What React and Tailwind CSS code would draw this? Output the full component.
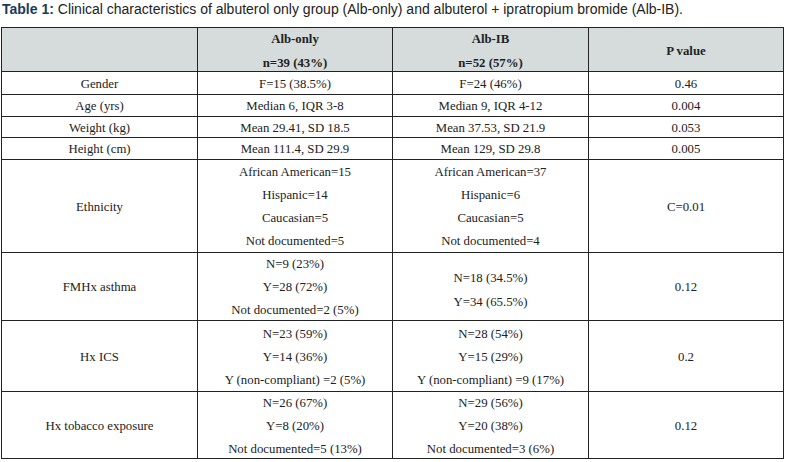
import React from "react";

const rows = [
  { h: "h-[23px]", c: [["Gender"], ["F=15 (38.5%)"], ["F=24 (46%)"], ["0.46"]] },
  { h: "h-[22px]", c: [["Age (yrs)"], ["Median 6, IQR 3-8"], ["Median 9, IQR 4-12"], ["0.004"]] },
  { h: "h-[21px]", c: [["Weight (kg)"], ["Mean 29.41, SD 18.5"], ["Mean 37.53, SD 21.9"], ["0.053"]] },
  { h: "h-[22px]", c: [["Height (cm)"], ["Mean 111.4, SD 29.9"], ["Mean 129, SD 29.8"], ["0.005"]] },
  {
    h: "h-[93px]",
    c: [
      ["Ethnicity"],
      ["African American=15", "Hispanic=14", "Caucasian=5", "Not documented=5"],
      ["African American=37", "Hispanic=6", "Caucasian=5", "Not documented=4"],
      ["C=0.01"],
    ],
  },
  {
    h: "h-[68px]",
    c: [
      ["FMHx asthma"],
      ["N=9 (23%)", "Y=28 (72%)", "Not documented=2 (5%)"],
      ["N=18 (34.5%)", "Y=34 (65.5%)"],
      ["0.12"],
    ],
    wide: 2,
  },
  {
    h: "h-[71px]",
    c: [
      ["Hx ICS"],
      ["N=23 (59%)", "Y=14 (36%)", "Y (non-compliant) =2 (5%)"],
      ["N=28 (54%)", "Y=15 (29%)", "Y (non-compliant) =9 (17%)"],
      ["0.2"],
    ],
  },
  {
    h: "h-[67px]",
    c: [
      ["Hx tobacco exposure"],
      ["N=26 (67%)", "Y=8 (20%)", "Not documented=5 (13%)"],
      ["N=29 (56%)", "Y=20 (38%)", "Not documented=3 (6%)"],
      ["0.12"],
    ],
  },
];

function Cell({ lines, h, bold, bg, wide }) {
  return (
    <div
      className={`${h} ${bg ? "bg-[#d5dcdb]" : "bg-white"} border-r border-b border-[#222222] flex flex-col items-center justify-center ${wide ? "pt-[6px]" : "pt-[2px]"} ${bold ? "font-bold" : ""}`}
    >
      {lines.map((l, i) => (
        <div key={i} className={`${wide || bold ? "leading-[24px]" : "leading-[23px]"} whitespace-nowrap`}>
          {l}
        </div>
      ))}
    </div>
  );
}

export default function App() {
  return (
    <div className="w-[787px] h-[462px] bg-white overflow-hidden">
      <div
        className="pl-[2px] pt-[1px] h-[27px] text-[14px] leading-[16px] text-[#222222] whitespace-nowrap"
        style={{ fontFamily: '"Liberation Sans", Arial, sans-serif' }}
      >
        <span className="font-bold text-[#1a3a5c]">Table 1:</span> Clinical characteristics of albuterol only
        group (Alb-only) and albuterol + ipratropium bromide (Alb-IB).
      </div>
      <div
        className="ml-[1px] w-[783px] grid grid-cols-[196px_195px_196px_195px] border-l border-t border-[#222222] text-[12.8px] text-[#222222]"
        style={{ fontFamily: '"Liberation Serif", "Times New Roman", serif' }}
      >
        <Cell h="h-[44px]" lines={[""]} bg />
        <Cell h="h-[44px]" lines={["Alb-only", "n=39 (43%)"]} bold bg />
        <Cell h="h-[44px]" lines={["Alb-IB", "n=52 (57%)"]} bold bg />
        <Cell h="h-[44px]" lines={["P value"]} bold bg />
        {rows.map((r, i) =>
          r.c.map((lines, j) => (
            <Cell key={`${i}-${j}`} h={r.h} lines={lines} wide={r.wide === j} />
          ))
        )}
      </div>
    </div>
  );
}
